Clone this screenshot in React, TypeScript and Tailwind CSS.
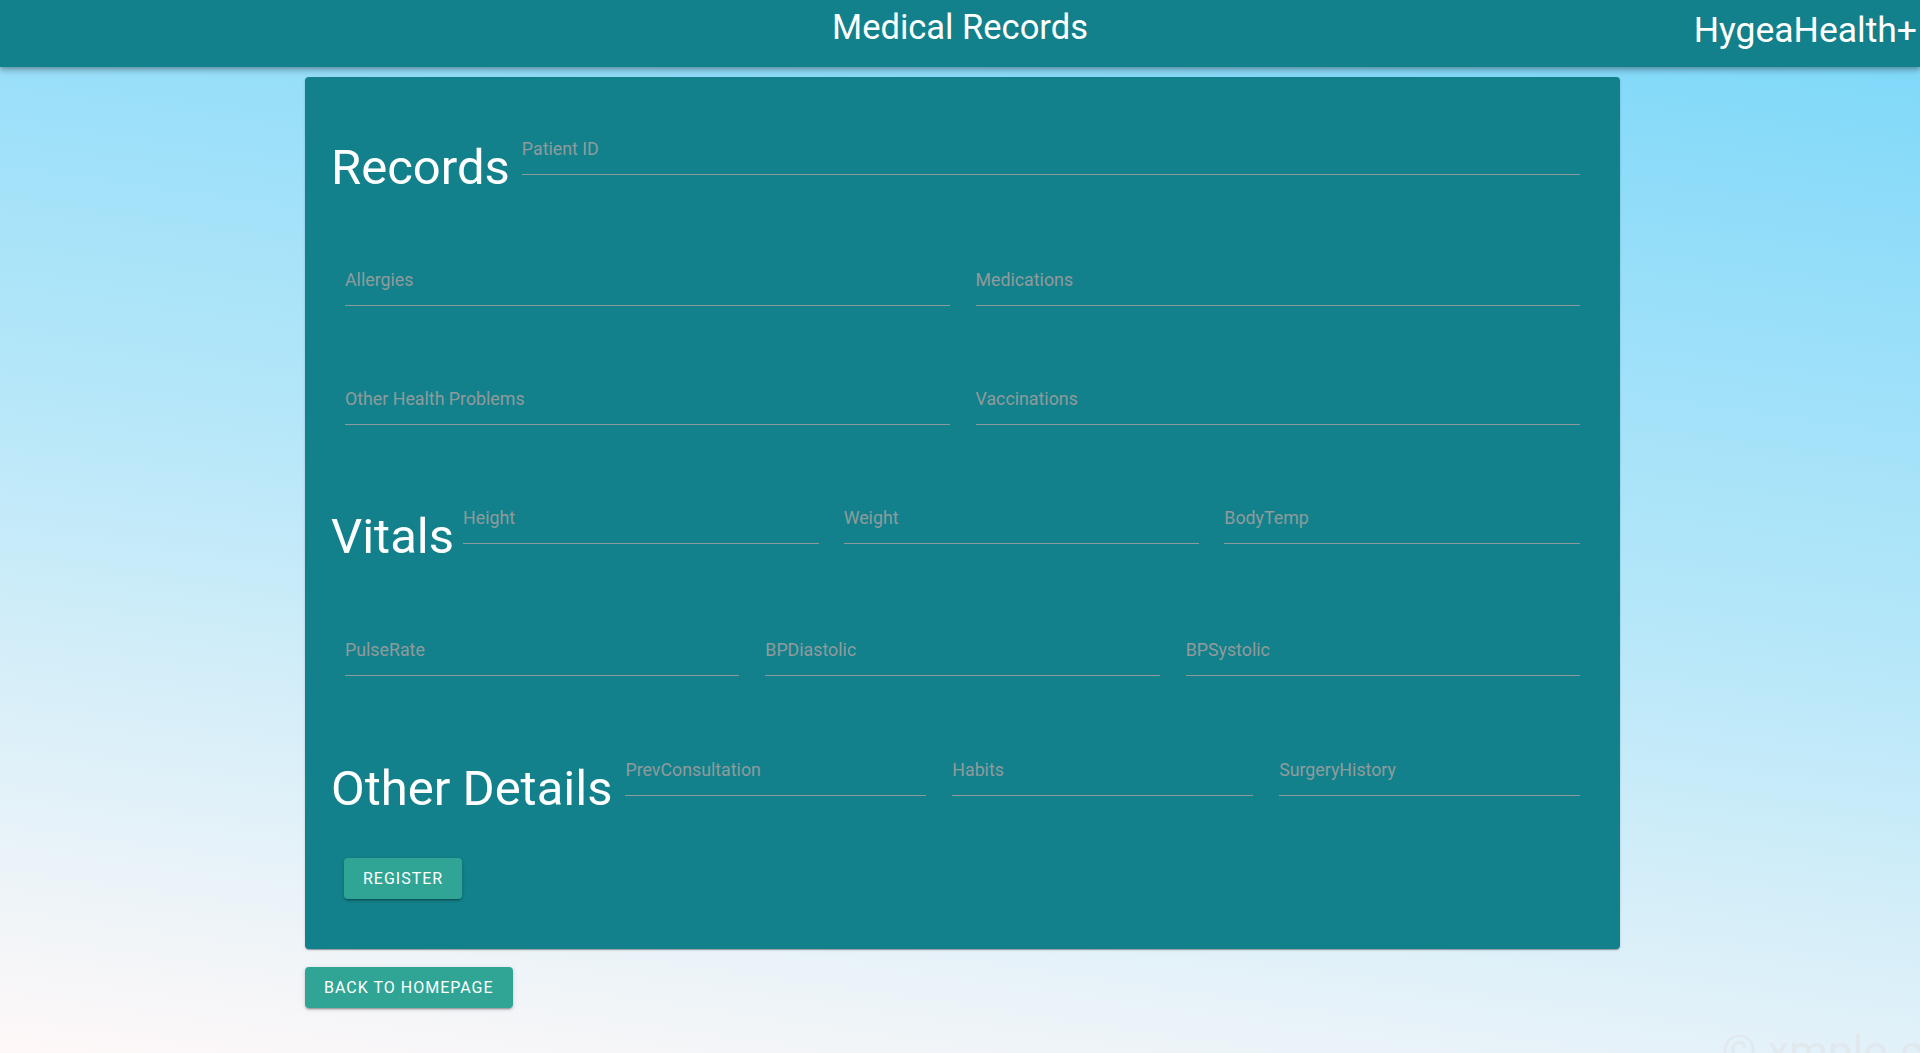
import React from "react";

const labelCls = "text-[17.8px] leading-[20px] text-[#8f9b9c] whitespace-nowrap";

function Field({ label, className = "" }: { label: string; className?: string }) {
  return (
    <div className={`flex flex-col ${className}`}>
      <span className={labelCls}>{label}</span>
      <div className="h-[15px]" />
      <div className="h-px bg-[#8c9a9b]" />
    </div>
  );
}

function Heading({ children }: { children: React.ReactNode }) {
  return (
    <h2 className="mt-[4px] shrink-0 text-[49px] leading-none font-normal text-white whitespace-nowrap">
      {children}
    </h2>
  );
}

function Button({ children }: { children: React.ReactNode }) {
  return (
    <button className="h-[41px] rounded-[4px] bg-[#30a596] px-[19px] text-[16px] font-normal uppercase tracking-[1px] text-white shadow-[0_3px_1px_-2px_rgba(0,0,0,0.2),0_2px_2px_0_rgba(0,0,0,0.14),0_1px_5px_0_rgba(0,0,0,0.12)]">
      {children}
    </button>
  );
}

export default function App() {
  return (
    <div className="relative h-screen overflow-hidden bg-linear-188 from-[#79d7f9] via-[#b6e7f9] to-[#fff8f8] font-['Roboto',sans-serif]">
      {/* app bar */}
      <header className="relative z-10 grid h-[67px] grid-cols-[1fr_auto_1fr] bg-[#13818b] shadow-[0_2px_4px_-1px_rgba(0,0,0,0.2),0_4px_5px_0_rgba(0,0,0,0.14),0_1px_10px_0_rgba(0,0,0,0.12)]">
        <div />
        <h1 className="mt-[10px] text-[34.5px] leading-none font-normal text-white">Medical Records</h1>
        <div className="flex justify-end pr-[3px]">
          <span className="mt-[13px] text-[35.5px] leading-none text-white">HygeaHealth+</span>
        </div>
      </header>

      <main className="pl-[305px] pt-[10px]">
        <section className="w-[1315px] rounded-[4px] bg-[#13818b] pl-[26px] pr-[40px] pt-[62px] pb-[50px] shadow-[0_2px_1px_-1px_rgba(0,0,0,0.2),0_1px_1px_0_rgba(0,0,0,0.14),0_1px_3px_0_rgba(0,0,0,0.12)]">
          <div className="flex items-start gap-[12px]">
            <Heading>Records</Heading>
            <Field label="Patient ID" className="flex-1" />
          </div>

          <div className="mt-[78px] grid grid-cols-2 gap-[26px] pl-[14px]">
            <Field label="Allergies" />
            <Field label="Medications" />
          </div>

          <div className="mt-[83px] grid grid-cols-2 gap-[26px] pl-[14px]">
            <Field label="Other Health Problems" />
            <Field label="Vaccinations" />
          </div>

          <div className="mt-[83px] flex items-start gap-[9px]">
            <Heading>Vitals</Heading>
            <div className="grid flex-1 grid-cols-3 gap-[25px]">
              <Field label="Height" />
              <Field label="Weight" />
              <Field label="BodyTemp" />
            </div>
          </div>

          <div className="mt-[79px] grid grid-cols-3 gap-[26px] pl-[14px]">
            <Field label="PulseRate" />
            <Field label="BPDiastolic" />
            <Field label="BPSystolic" />
          </div>

          <div className="mt-[84px] flex items-start gap-[13px]">
            <Heading>Other Details</Heading>
            <div className="grid flex-1 grid-cols-3 gap-[26px]">
              <Field label="PrevConsultation" />
              <Field label="Habits" />
              <Field label="SurgeryHistory" />
            </div>
          </div>

          <div className="mt-[45px] pl-[13px]">
            <Button>Register</Button>
          </div>
        </section>

        <div className="mt-[18px]">
          <Button>Back to Homepage</Button>
        </div>
      </main>

      <span className="pointer-events-none absolute left-[1722px] top-[1030px] text-[44px] leading-none text-[#e2e9ee] whitespace-nowrap">
        © xmplo.com
      </span>
    </div>
  );
}
